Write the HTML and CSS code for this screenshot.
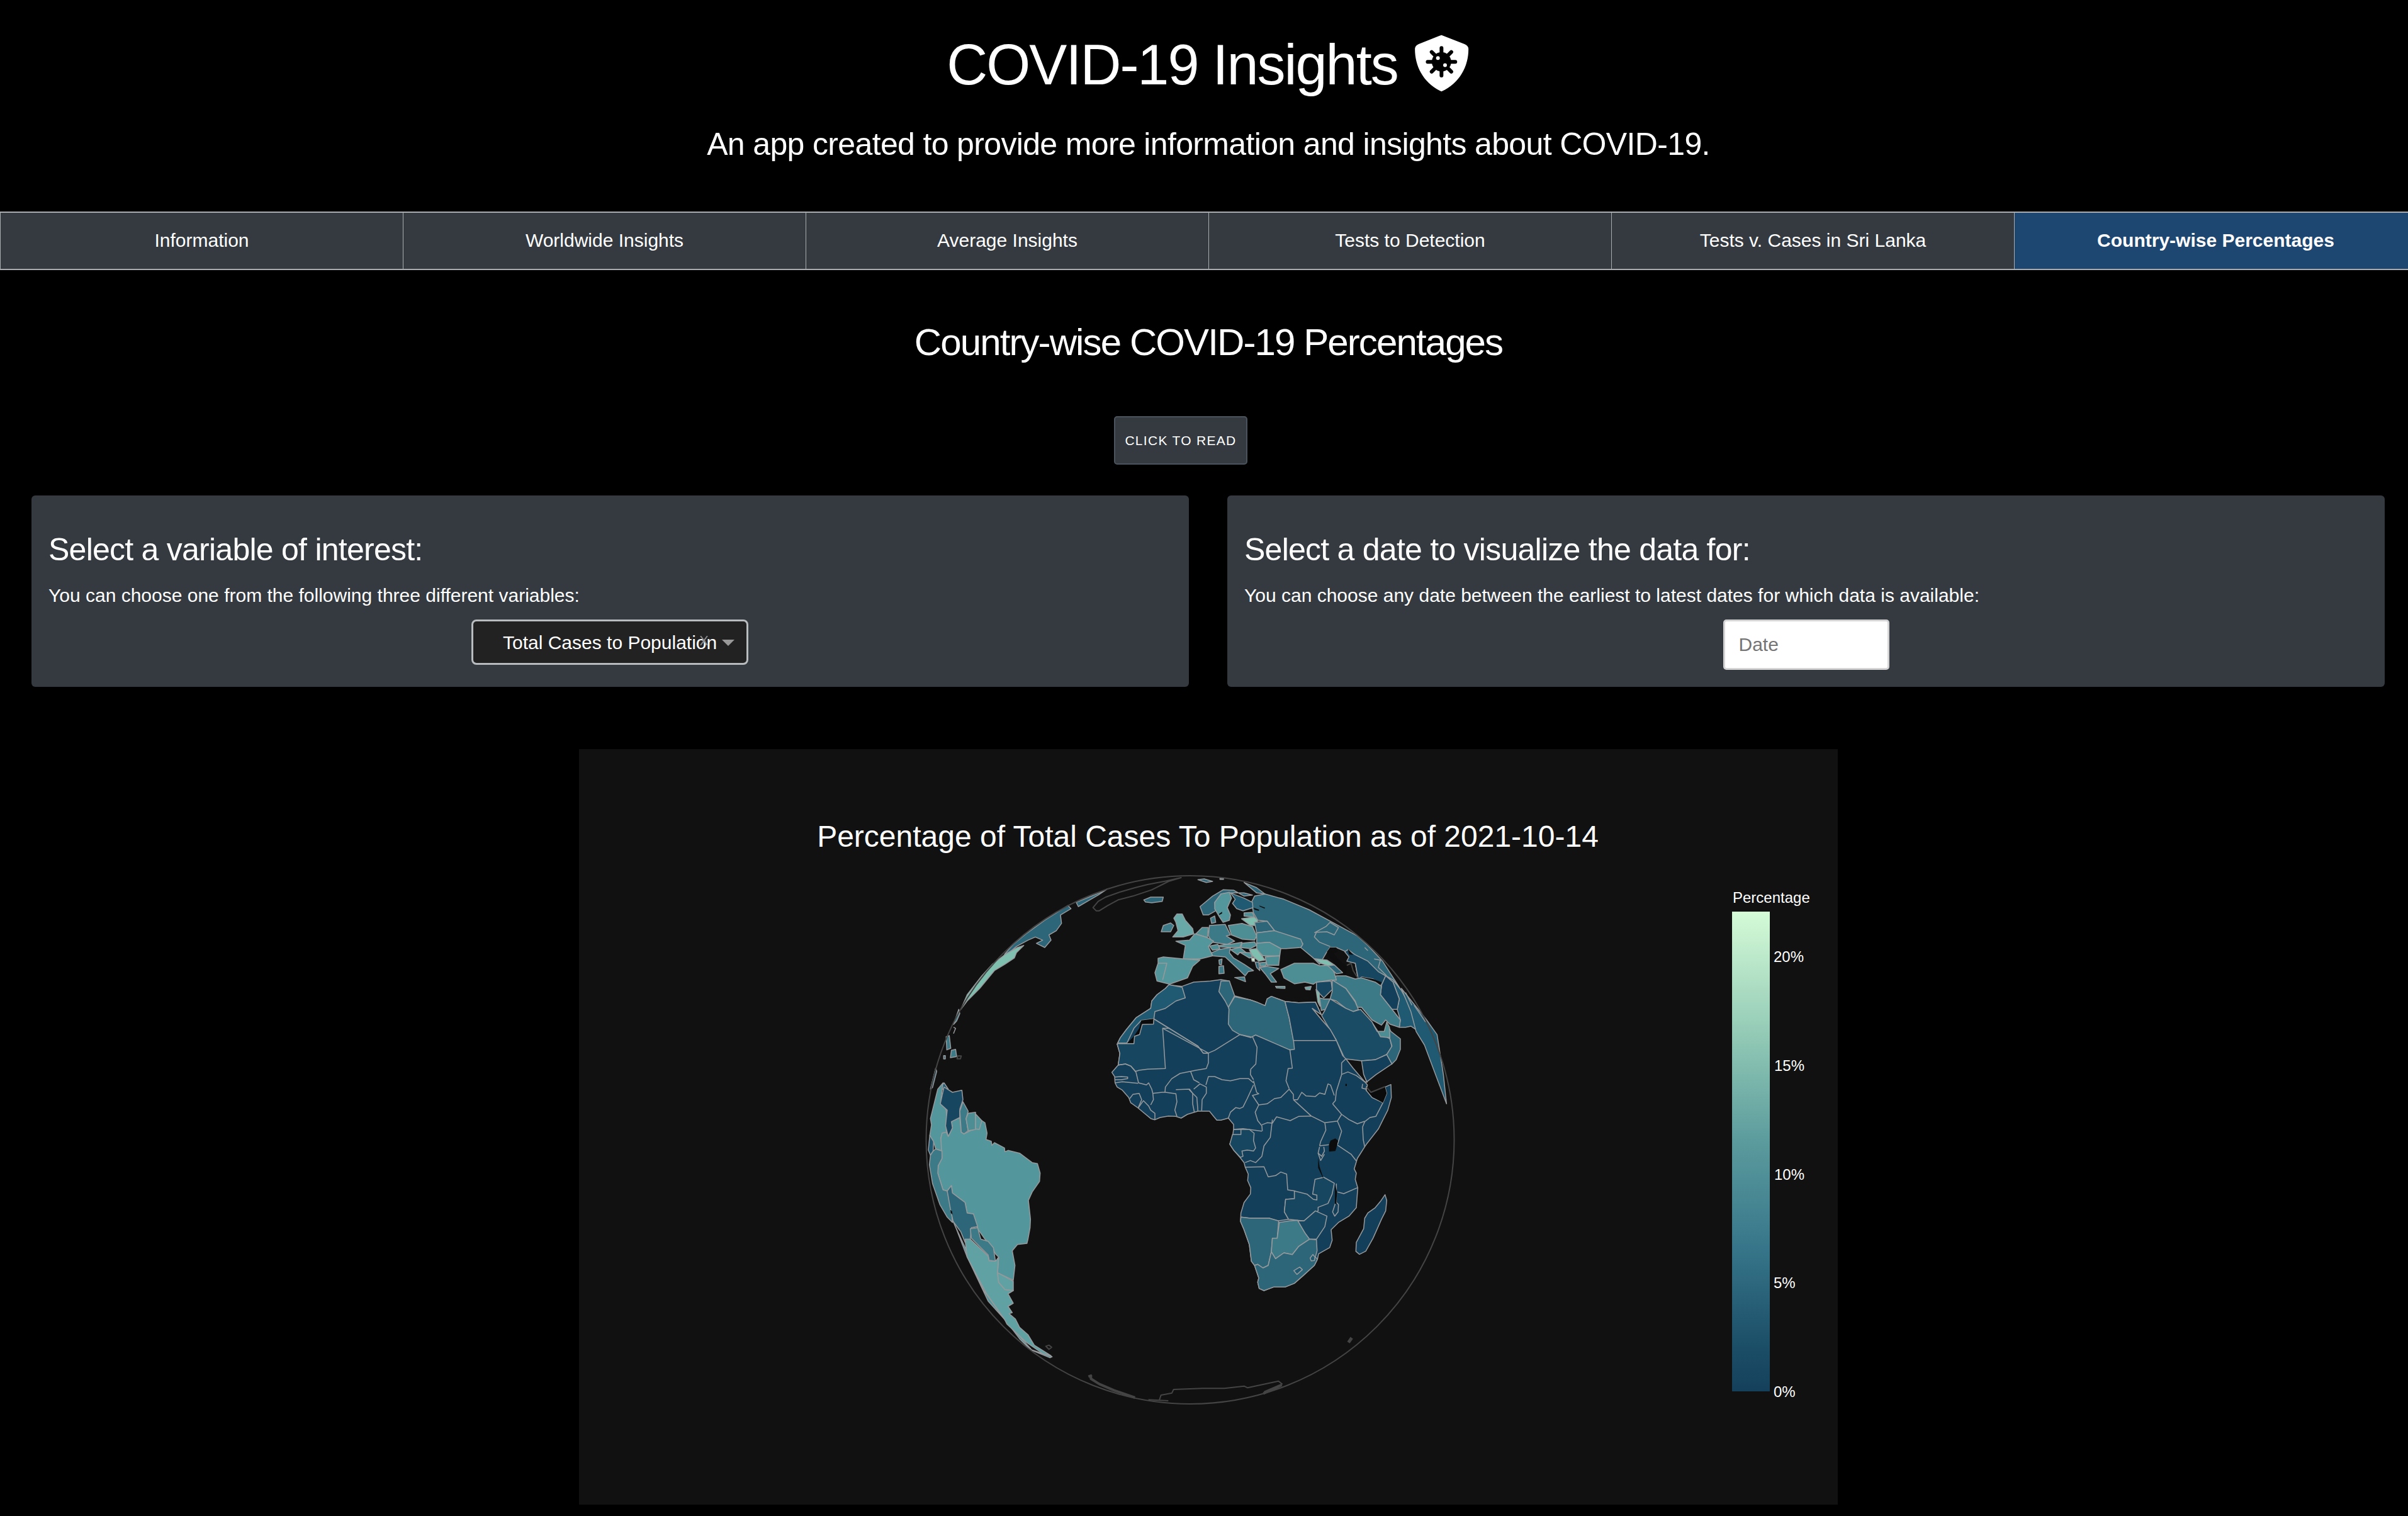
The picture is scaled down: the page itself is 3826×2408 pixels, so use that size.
FILE: index.html
```html
<!DOCTYPE html>
<html lang="en">
<head>
<meta charset="utf-8">
<title>COVID-19 Insights</title>
<link rel="stylesheet" href="styles.css">
</head>
<body>
<div class="page">
<header class="masthead">
  <h1 class="app-title">COVID-19 Insights
    <svg class="shield" viewBox="40 -20 285 292" aria-hidden="true">
      <path class="shield-body" d="M182 -18 L292 25 Q311 32 311 50 C311 130 270 212 182 252 C95 212 55 130 55 50 Q55 32 73 25 Z"/>
      <g class="virus">
        <circle cx="182" cy="110" r="46"/>
        <path d="M182 110V44M182 110V176M182 110H116M182 110H248M182 110L135 63M182 110L229 63M182 110L135 157M182 110L229 157"/>
      </g>
      <circle class="virus-hole" cx="165" cy="92" r="9"/>
      <circle class="virus-hole" cx="199" cy="126" r="9"/>
    </svg>
  </h1>
  <p class="app-sub">An app created to provide more information and insights about COVID-19.</p>
</header>

<nav class="tabs">
  <a class="tab">Information</a>
  <a class="tab">Worldwide Insights</a>
  <a class="tab">Average Insights</a>
  <a class="tab">Tests to Detection</a>
  <a class="tab">Tests v. Cases in Sri Lanka</a>
  <a class="tab tab-active">Country-wise Percentages</a>
</nav>

<main class="content">
  <h2 class="section-title">Country-wise COVID-19 Percentages</h2>
  <div class="read-row"><button class="read-btn">Click to read</button></div>

  <section class="controls">
    <div class="card">
      <h3 class="card-title">Select a variable of interest:</h3>
      <p class="card-text">You can choose one from the following three different variables:</p>
      <div class="card-control">
        <div class="dropdown">
          <span class="dropdown-value">Total Cases to Population</span>
          <svg class="dropdown-clear" viewBox="0 0 15 15" aria-hidden="true"><path d="M2 0L13 15M13 0L2 15"/></svg>
          <span class="dropdown-arrow"></span>
        </div>
      </div>
    </div>
    <div class="card">
      <h3 class="card-title">Select a date to visualize the data for:</h3>
      <p class="card-text">You can choose any date between the earliest to latest dates for which data is available:</p>
      <div class="card-control">
        <input class="date-input" type="text" placeholder="Date">
      </div>
    </div>
  </section>

  <section class="chart">
    <svg class="chart-svg" viewBox="920 1190 2000 1200" width="2000" height="1200">
      <defs>
        <linearGradient id="scale" x1="0" y1="0" x2="0" y2="1">
          <stop offset="0" stop-color="#d5fbd7"/>
          <stop offset="0.27" stop-color="#8fc7b4"/>
          <stop offset="0.48" stop-color="#5b9b9d"/>
          <stop offset="0.70" stop-color="#37768a"/>
          <stop offset="0.90" stop-color="#1c4f68"/>
          <stop offset="1" stop-color="#15405c"/>
        </linearGradient>
      </defs>

      <text class="chart-title" x="1919" y="1345">Percentage of Total Cases To Population as of 2021-10-14</text>

      <!-- North America limb, coordinates of crop at 1470,1390 x3 -->
      <g transform="translate(1470 1390) scale(.33333)">
        <polygon class="coast" points="800,155 815,170 830,170 870,145 920,118 990,100 1080,70 1160,30 1220,12 1150,28 1060,45 1000,60 930,80 860,105 825,125"/>
        <polygon class="l d5" points="480,280 570,215 680,145 695,160 645,190 650,230 625,265 590,285 600,310 570,345 530,325 560,310 525,295 490,310 435,340 400,370 370,395 380,375 420,330"/>
        <polygon class="l d11" points="320,425 385,375 440,345 470,335 435,370 425,395 380,425 330,455 260,540 200,600 170,640 200,570 270,480"/>
        <polygon class="l d5" points="720,130 780,105 830,85 870,65 825,95 790,115 730,150"/>
        <polygon class="l d6" points="100,770 115,765 122,825 103,833"/>
        <polygon class="l d6" points="125,835 145,830 150,865 120,870"/>
        <polygon class="l d5" points="88,860 96,860 96,876 88,876"/>
        <polygon class="l d6" points="160,640 135,712 150,695 165,660"/>
        <polygon class="l d4" points="25,1020 50,920 55,935 35,1012"/>
        <polygon class="l d4" points="65,1020 90,990 110,1020"/>
        <polyline class="b" points="135,725 145,730 135,755"/>
        <polygon class="coast" points="155,862 172,862 168,875 152,875"/>
      </g>

      <!-- Europe, Middle East, Asia: crop at 1780,1390 x3 -->
      <g transform="translate(1780 1390) scale(.33333)">
        <polygon class="l d5" points="640,100 690,90 780,115 900,165 1030,235 1130,290 1180,335 1250,410 1340,550 1300,500 1265,480 1245,525 1205,495 1150,485 1135,500 1120,420 1075,365 1030,345 1000,345 985,365 950,425 920,395 860,345 870,325 735,265 700,220 655,215 635,180 625,130"/>
        <polygon class="l d2" points="1070,365 1085,355 1120,380 1180,410 1230,460 1265,480 1245,525 1205,495 1150,485 1135,500 1120,420 1080,410 1090,390"/>
        <polygon class="hole" points="985,365 1000,345 1030,345 1035,365 1015,372 1050,410 1080,435 1075,475 1120,495 1135,500 1150,485 1205,495 1245,510 1240,525 1210,510 1150,500 1100,505 1075,480 1040,440 1000,395"/>
        <polygon class="hole" points="1085,352 1110,380 1090,378"/>
        <polyline class="coast-line" points="1080,430 1100,420 1110,455 1135,495"/>
        <polyline class="b" points="925,275 980,245 1000,225 1040,250 1020,285 985,270 935,272 925,295 950,320 1000,340"/>
        <polyline class="b" points="1165,345 1180,360"/>
        <polyline class="b" points="1210,400 1240,405 1230,440 1270,480"/>
        <polygon class="l d4" points="1265,480 1300,500 1340,550 1390,640 1415,740 1385,720 1360,725 1330,725 1335,690 1320,640 1330,590 1300,510"/>
        <polygon class="l d1" points="1245,525 1265,480 1300,510 1330,590 1320,640 1295,640 1240,570"/>
        <polygon class="l d4" points="1340,540 1420,640 1460,690 1510,760 1540,950 1555,1090 1450,810 1410,745 1385,650"/>
        <polyline class="b" points="1400,620 1455,700"/>
        <polyline class="b" points="1360,560 1390,620"/>

        <polygon class="l d6" points="1010,505 1030,480 1075,480 1120,495 1150,490 1215,510 1245,530 1240,570 1280,620 1335,690 1330,725 1285,710 1265,690 1245,715 1200,690 1150,630 1130,630 1120,600 1075,540"/>
        <polygon class="l d5" points="1010,500 1075,540 1120,605 1135,640 1110,650 1075,635 1030,600 1000,590 1010,555"/>
        <polygon class="l d2" points="935,510 1005,505 1010,545 970,585 950,565 935,545"/>
        <polygon class="l d6" points="950,585 970,590 1000,590 990,620 995,635 958,645"/>
        <polygon class="l d11" points="933,545 948,560 952,625 942,605"/>
        <polygon class="l d3" points="960,670 975,645 1000,590 1075,635 1110,650 1145,640 1200,700 1225,745 1285,780 1295,820 1270,855 1215,880 1150,885 1070,875 1030,788"/>
        <polygon class="l d1" points="1150,885 1215,880 1270,855 1295,900 1220,950 1175,985 1160,950"/>
        <polygon class="l d5" points="1270,855 1295,815 1285,780 1270,705 1290,745 1335,780 1335,830 1315,880 1295,900"/>
        <polygon class="l d7" points="1205,710 1225,740 1240,770 1285,775 1283,725 1270,700 1258,745 1225,745"/>

        <polygon class="l d7" points="765,450 830,420 920,420 950,432 1000,430 1020,465 1030,500 1005,500 935,510 920,520 880,510 830,518 780,490"/>
        <polygon class="l d11" points="925,398 985,405 1020,428 990,432 955,420"/>
        <polygon class="l d5" points="990,432 1020,428 1060,465 1030,470"/>

        <polygon class="l d5" points="380,150 440,100 490,70 540,72 590,100 630,95 590,85 525,85 480,90 450,130 455,170 420,190 395,190"/>
        <polygon class="l d8" points="480,90 520,82 530,110 510,155 525,190 520,215 490,225 470,195 450,160 450,130"/>
        <polygon class="l d4" points="525,85 590,110 630,130 632,155 585,170 555,160 535,135 548,115"/>
        <polygon class="hole" points="470,185 485,175 485,183 472,190"/>
        <polygon class="hole" points="635,155 662,165 660,170 640,165"/>
        <polygon class="hole" points="662,145 690,155 688,160 665,150"/>
        <polygon class="l d7" points="590,180 630,178 640,200 590,195"/>
        <polygon class="l d11" points="578,208 640,200 655,215 648,240 620,240"/>
        <polygon class="l d6" points="430,205 450,195 455,225 435,230"/>
        <polygon class="l d5" points="640,225 700,220 735,265 650,275"/>
        <polygon class="l d7" points="515,240 580,230 630,245 650,290 640,310 580,305 530,285"/>
        <polygon class="l d6" points="425,240 500,235 525,285 505,290 545,315 510,330 440,320 420,290"/>
        <polygon class="l d7" points="360,280 390,250 420,250 415,298"/>
        <polygon class="l d7" points="520,330 580,320 570,345 525,345 440,340 510,330"/>
        <polygon class="l d7" points="425,338 465,330 475,352 440,358"/>
        <polygon class="l d6" points="435,370 470,355 525,345 520,370 540,395 590,425 635,455 610,460 595,480 570,455 500,390 440,385"/>
        <polygon class="l d8" points="265,315 330,310 355,280 415,298 445,315 420,340 440,385 380,400 300,400 310,335"/>
        <polygon class="l d8" points="180,397 205,390 305,400 380,405 345,435 320,490 235,520 175,505 165,465 180,420"/>
        <polyline class="b" points="180,420 222,420 202,500"/>
        <polygon class="l d10" points="255,205 270,185 295,185 310,215 345,255 350,280 300,295 250,295 275,265 265,225"/>
        <polygon class="l d6" points="195,270 205,240 240,228 255,240 240,270"/>
        <polygon class="l d5" points="112,118 145,105 205,105 200,125 150,132 120,128"/>
        <polygon class="l d5" points="370,22 400,18 440,30 410,35"/>
        <polygon class="l d5" points="475,15 492,15 492,20 475,20"/>
        <polygon class="l d5" points="590,35 650,60 690,90 650,85"/>

        <polygon class="l d6" points="650,275 735,265 860,305 870,330 860,345 790,350 765,350 710,320 650,325"/>
        <polygon class="l d7" points="650,325 710,320 765,350 760,385 680,385 650,355"/>
        <polygon class="l d7" points="580,325 640,318 650,335 620,350 575,345"/>
        <polygon class="l d7" points="525,355 570,345 620,385 625,395 570,368 560,380"/>
        <polygon class="l d7" points="570,368 620,370 630,390 615,395"/>
        <polygon class="l d11" points="615,355 650,350 690,405 660,410 630,385"/>
        <polygon class="l d12" points="625,395 640,395 640,412 628,410"/>
        <polygon class="l d5" points="643,415 660,415 665,455 650,440"/>
        <polygon class="l d7" points="690,390 760,385 755,430 700,430"/>
        <polygon class="l d7" points="665,418 695,415 695,432 668,435"/>
        <polygon class="l d6" points="665,440 700,435 755,445 715,470 745,510 720,510 690,470"/>
        <polygon class="l d6" points="470,435 492,432 495,468 470,470"/>
        <polygon class="l d6" points="470,405 485,400 482,428 472,425"/>
        <polygon class="l d6" points="545,488 592,485 597,508"/>
        <polygon class="l d7" points="740,530 785,530 785,540 745,538"/>
        <polygon class="l d10" points="880,535 910,530 905,547 885,545"/>
      </g>

      <!-- Africa: crop at 1760,1620 x3 -->
      <g transform="translate(1760 1620) scale(.33333)">
        <polygon class="l d1" points="292,-168 305,-165 355,-160 410,-180 490,-185 540,-192 580,-185 585,-160 590,-130 605,-115 680,-95 710,-85 750,-68 760,-100 780,-112 845,-88 910,-82 990,-85 1018,-25 975,-55 1020,0 1060,45 1090,98 1120,170 1135,185 1170,230 1225,295 1238,310 1232,335 1260,370 1312,395 1330,350 1322,320 1350,308 1352,370 1335,430 1290,520 1235,590 1225,605 1190,660 1175,710 1185,730 1180,760 1192,800 1185,895 1150,935 1100,965 1065,1000 1070,1050 1058,1085 1005,1115 1000,1140 985,1170 930,1220 890,1255 845,1273 790,1273 745,1290 722,1280 715,1250 720,1230 700,1170 685,1150 675,1070 650,1000 633,960 635,920 650,870 680,830 682,800 667,765 670,735 655,700 650,680 630,655 600,620 582,592 595,560 600,520 600,498 575,468 540,478 520,478 505,460 485,435 430,435 380,450 350,468 325,460 290,458 250,465 225,476 205,470 145,420 110,395 100,370 70,335 45,320 35,300 33,270 20,250 50,215 58,160 45,115 60,85 90,45 135,-10 205,-55 210,-90 235,-120 275,-150"/>

        <polygon class="l d4" points="292,-168 355,-155 370,-105 325,-90 275,-55 225,-40 220,-5 160,2 125,40 92,110 48,110 60,85 90,45 135,-10 205,-55 210,-90 235,-120 275,-150"/>
        <polygon class="sahara" points="92,112 125,78 150,40 160,2 220,-5 218,20 165,22 152,70 128,78 125,112"/>
        <polyline class="b" points="48,113 125,113"/>

        <polygon class="l d2" points="48,113 125,113 128,78 152,70 165,22 218,20 220,-5 430,125 455,158 480,158 262,40 275,232 190,235 150,240 133,245 110,220 85,210 50,215 58,160 45,115"/>
        <polygon class="l d5" points="575,-60 605,-115 580,-185 540,-185 530,-135 560,-90"/>
        <polygon class="l d5" points="575,-60 605,-110 680,-95 710,-85 750,-68 760,-100 780,-112 845,-88 865,-10 885,90 890,140 868,143 705,72 685,82 630,70 595,50 575,20 578,-50"/>
        <polygon class="l d1" points="885,98 1090,98 1060,45 1020,0 975,-55 1018,-25 990,-85 910,-82 845,-88 865,-10"/>

        <polyline class="b" points="262,40 295,40"/>
        <polyline class="b" points="220,-5 430,125 455,158 480,158 510,145 630,70"/>
        <polyline class="b" points="630,70 685,85"/>
        <polyline class="b" points="50,215 85,210 110,220 135,250 147,300"/>
        <polyline class="b" points="35,272 65,270 95,272 95,280 65,285 35,285"/>
        <polyline class="b" points="35,300 70,295 145,302"/>
        <polyline class="b" points="147,300 185,310 195,300 210,330 215,350 218,380 205,405"/>
        <polyline class="b" points="105,375 120,355 150,350 162,380 145,420"/>
        <polyline class="b" points="145,420 170,385 195,410 205,430 225,445 225,476"/>
        <polyline class="b" points="213,350 260,345 275,345 325,352 330,390 320,430 330,460"/>
        <polyline class="b" points="325,332 390,330 405,350 405,400 413,440"/>
        <polyline class="b" points="388,332 425,370 430,435"/>
        <polyline class="b" points="410,330 440,305 470,320 470,350 450,380 448,432"/>
        <polyline class="b" points="273,345 275,320 305,280 345,255 395,245 410,285 437,300"/>
        <polyline class="b" points="395,245 420,240 470,232 480,205 480,158"/>
        <polyline class="b" points="690,80 712,130 706,210 682,235 680,260 695,285"/>
        <polyline class="b" points="468,310 480,270 510,270 545,285 585,290 630,280 672,280 695,300"/>
        <polyline class="b" points="695,310 665,375 645,415 630,422 610,418 585,440 575,468"/>
        <polyline class="b" points="695,290 710,345 720,352 690,360 720,405 703,440 715,480 735,505 737,530"/>
        <polyline class="b" points="720,405 760,400 795,375 825,370 865,330 885,355 885,378"/>
        <polyline class="b" points="868,140 880,230 860,232 850,290 865,328"/>
        <polyline class="b" points="885,380 905,380 925,345 945,362 990,365 1010,348 1035,355 1050,305 1062,310 1080,360"/>
        <polyline class="b" points="1135,185 1115,205 1115,260 1090,340 1085,385 1072,400"/>
        <polyline class="b" points="1115,260 1145,248 1185,265 1225,295 1238,298"/>
        <polyline class="b" points="1215,305 1212,325 1230,330 1235,315"/>
        <polyline class="b" points="1230,335 1312,395 1278,460 1250,465 1225,485"/>
        <polyline class="b" points="1072,400 1115,450 1150,475 1190,495 1225,483"/>
        <polyline class="b" points="1115,450 1095,482 1035,490"/>
        <polyline class="b" points="885,380 970,458 1035,490"/>
        <polyline class="b" points="735,500 760,490 785,492 805,462 870,480 910,460 970,458"/>
        <polyline class="b" points="785,475 775,560 745,600 735,650 705,680 680,670 655,680"/>
        <polyline class="b" points="600,522 645,518 735,530"/>

        <polygon class="l d2" points="595,546 635,546 635,522 675,522 698,540 695,575 705,610 695,625 665,620 640,625 645,650 632,655 600,620 582,592"/>
        <polyline class="b" points="600,522 635,522"/>
        <polyline class="b" points="655,702 745,700 765,748 800,742 825,725 853,735 858,810 893,815"/>
        <polyline class="b" points="890,815 890,852 848,855 842,915 862,950"/>
        <polygon class="l d2" points="890,815 950,830 980,855 997,858 997,835 977,830 988,760 1030,750 1080,778 1070,830 1050,875 1003,893 1003,910 935,958 905,955 862,950 842,915 848,855 890,852"/>
        <polyline class="b" points="1035,490 1040,525 1015,580 1010,600"/>
        <polyline class="b" points="1095,482 1115,530 1095,595"/>
        <polyline class="b" points="1095,597 1160,640 1185,672"/>
        <polyline class="b" points="1225,485 1215,510 1218,570 1225,605"/>
        <polyline class="b" points="1010,600 1055,595"/>
        <polyline class="b" points="1010,605 1003,635 1020,650 1033,625 1030,605"/>
        <polyline class="b" points="1003,635 1015,670 1033,640"/>
        <polyline class="b" points="1095,820 1125,828 1190,800"/>
        <polyline class="b" points="1090,780 1090,870 1100,880 1098,915 1082,935 1072,915 1085,875"/>
        <polygon class="l d2" points="935,958 990,910 1045,935 1035,985 995,1045 962,1045 940,1015 905,958"/>
        <polyline class="b" points="635,940 680,945 770,945 810,958 862,950"/>

        <polygon class="l d5" points="635,940 680,945 770,945 815,958 808,1040 785,1040 780,1105 765,1170 740,1182 715,1165 700,1170 685,1150 675,1070 650,1000 633,960"/>
        <polygon class="l d6" points="818,965 865,958 905,955 940,1015 962,1045 910,1080 880,1118 840,1110 800,1138 780,1105 785,1040 808,1040"/>
        <polygon class="l d5" points="700,1170 715,1165 740,1182 765,1170 780,1105 800,1138 840,1110 880,1118 910,1080 962,1045 995,1048 998,1100 990,1130 1000,1140 985,1170 930,1220 890,1255 845,1273 790,1273 745,1290 722,1280 715,1250 720,1230"/>
        <polygon class="l d4" points="887,1195 915,1178 928,1190 902,1213"/>
        <polygon class="l d4" points="965,1135 978,1118 988,1130 985,1147 970,1148"/>
        <polygon class="l d1" points="1322,833 1330,860 1325,910 1305,950 1265,1040 1230,1102 1200,1117 1183,1103 1185,1060 1220,995 1225,945 1240,920 1275,895 1300,865"/>

        <polygon class="sahara" points="1235,322 1255,345 1322,320 1330,350 1312,395 1260,365 1238,340"/>
        <polyline class="coast-line" points="1235,322 1255,345 1322,318"/>
        <polygon class="lake" points="1055,595 1062,575 1085,565 1098,575 1090,610 1085,625 1055,628"/>
        <polygon class="lake" points="1003,655 1010,700 1030,760 1022,745 1003,705"/>
        <polygon class="lake" points="1085,785 1093,820 1090,880 1083,875 1083,820"/>
        <polygon class="lake" points="1133,305 1140,305 1140,315 1133,315"/>
      </g>

      <!-- South America and Antarctica: crop at 1470,1720 x3 -->
      <g transform="translate(1470 1720) scale(.33333)">
        <polygon class="l d8" points="60,30 85,0 75,80 100,130 105,180 100,225 110,255 85,238 75,260 80,325 50,315 40,280 22,250 30,200 25,170 40,110"/>
        <polygon class="l d8" points="80,240 100,235 110,255 130,215 125,185 165,165 172,235 185,243 215,228 240,220 270,180 285,190 295,240 290,270 315,278 318,298 330,285 378,310 380,328 395,322 450,335 510,380 535,385 548,430 545,470 510,520 492,560 502,650 500,690 490,745 485,765 440,770 415,800 428,870 420,940 345,905 350,830 335,815 318,780 285,745 250,695 230,625 200,620 190,570 130,525 125,490 105,515 85,510 60,430 62,395 80,360 75,265"/>
        <polygon class="l d2" points="72,100 90,20 130,45 175,35 180,80 165,125 165,165 125,185 130,215 110,255 97,205 105,130"/>
        <polygon class="l d6" points="165,135 180,90 205,135 195,170 205,228 185,243 172,235"/>
        <polygon class="l d7" points="205,145 240,140 240,180 240,222 205,228 195,170"/>
        <polygon class="l d8" points="240,148 270,180 258,222 240,220"/>
        <polygon class="l d4" points="18,290 22,250 40,280 38,325 25,345 15,320"/>
        <polygon class="l d6" points="25,345 38,325 50,315 80,325 80,360 62,395 60,430 85,510 105,515 125,600 130,665 105,640 70,580 35,480 20,390"/>
        <polygon class="l d5" points="105,515 125,490 130,525 190,570 200,620 230,625 250,685 220,690 215,745 190,760 170,710 133,660 120,600"/>
        <polygon class="hole" points="120,605 128,612 130,628 122,620"/>
        <polygon class="l d6" points="215,695 250,690 265,745 300,755 325,785 335,850 305,845 300,820 220,740"/>
        <polygon class="l d8" points="133,660 165,730 195,795 210,850 300,1040 390,1140 450,1220 500,1270 605,1305 595,1310 510,1275 380,1130 280,990 200,830 150,700"/>
        <polygon class="l d9" points="190,745 215,745 300,825 305,848 335,850 350,830 345,905 350,950 380,985 420,990 395,1005 420,1050 395,1065 415,1095 400,1100 430,1125 450,1165 490,1200 520,1250 600,1300 560,1290 480,1235 390,1150 380,1130 290,1000 200,830 195,790"/>
        <polygon class="l d9" points="345,905 420,945 420,990 380,985 350,950"/>
        <polygon class="coast" points="575,1255 590,1250 603,1260 590,1270"/>
        <polyline class="coast-thick" points="778,1400 790,1395 790,1410 830,1435 900,1465 1000,1500"/>
        <polyline class="coast-line" points="1064,1510 1159,1515"/>
        <polyline class="coast-line" points="1115,1515 1124,1488 1176,1478 1184,1461 1322,1456 1426,1456 1520,1445 1537,1453 1684,1421 1701,1435 1615,1472"/>
        <polyline class="coast-thick" points="1612,1480 1700,1440"/>
      </g>
      <rect class="islet" x="2143" y="2124" width="5" height="9" transform="rotate(35 2145 2128)"/>

      <circle class="limb" cx="1891" cy="1810.5" r="419.5"/>

      <rect class="colorbar" x="2752" y="1448" width="60" height="762" fill="url(#scale)"/>
      <text class="cb-title" x="2753" y="1434">Percentage</text>
      <text class="cb-tick" x="2818" y="1528">20%</text>
      <text class="cb-tick" x="2819" y="1701">15%</text>
      <text class="cb-tick" x="2819" y="1874">10%</text>
      <text class="cb-tick" x="2818" y="2046">5%</text>
      <text class="cb-tick" x="2818" y="2219">0%</text>
    </svg>
  </section>
</main>
</div>
</body>
</html>
```
FILE: styles.css
```css
* { box-sizing: border-box; }
html, body { margin: 0; padding: 0; background: #000; }
body {
  height: 2408px;
  overflow: hidden;
  color: #fff;
  font-family: "Liberation Sans", Arial, sans-serif;
}
.page { width: 3840px; }

.masthead { padding-top: 49px; text-align: center; height: 336px; }
.app-title {
  margin: 0;
  display: flex;
  justify-content: center;
  align-items: center;
  gap: 22px;
  padding-left: 2px;
  font-size: 90px;
  font-weight: 400;
  line-height: 108px;
  letter-spacing: -2px;
}
.shield { width: 95px; height: 97px; }
.shield-body { fill: #fff; }
.virus { fill: #000; stroke: #000; }
.virus path { fill: none; stroke-width: 18; stroke-linecap: round; }
.virus-hole { fill: #fff; }
.app-sub {
  margin: 40px 0 0;
  font-size: 50px;
  line-height: 65px;
  letter-spacing: -0.65px;
}

.tabs {
  display: grid;
  grid-template-columns: repeat(6, 1fr);
  height: 93px;
}
.tab {
  display: flex;
  align-items: center;
  justify-content: center;
  padding-bottom: 2px;
  background: #343a40;
  border: 1px solid #a9adb0;
  border-width: 2px 0 2px 1px;
  font-size: 30px;
  color: #fff;
}
.tab-active { background: #1d4671; font-weight: 700; }

.section-title {
  margin: 79px 0 0;
  text-align: center;
  font-size: 60px;
  font-weight: 400;
  line-height: 72px;
  letter-spacing: -1.9px;
}
.read-row { display: flex; justify-content: center; margin-top: 81px; }
.read-btn {
  width: 212px;
  height: 77px;
  margin-right: 88px;
  padding: 0;
  background: #343a40;
  border: 2px solid #4b545c;
  border-radius: 5px;
  color: #fff;
  font-family: inherit;
  font-size: 21px;
  letter-spacing: 1.3px;
  text-transform: uppercase;
}

.controls {
  display: grid;
  grid-template-columns: 1839px 1839px;
  column-gap: 61px;
  margin: 49px 0 0 50px;
}
.card {
  height: 304px;
  padding: 56px 27px 0;
  background: #343a40;
  border-radius: 6px;
}
.card-title {
  margin: 0;
  font-size: 50px;
  font-weight: 400;
  line-height: 60px;
  letter-spacing: -0.75px;
}
.card-text {
  margin: 20px 0 0;
  font-size: 30px;
  line-height: 45px;
}
.card-control { display: flex; justify-content: center; margin-top: 16px; }

.dropdown {
  position: relative;
  display: flex;
  align-items: center;
  width: 440px;
  height: 72px;
  margin-left: -1px;
  padding: 2px 0 0 47px;
  background: #222;
  border: 3px solid #b9bcbe;
  border-radius: 8px;
  font-size: 30px;
}
.dropdown-clear {
  position: absolute;
  left: 359px;
  top: 23px;
  width: 15px;
  height: 15px;
}
.dropdown-clear path { fill: none; stroke: #8a8a8a; stroke-width: 2; }
.dropdown-arrow {
  position: absolute;
  left: 395px;
  top: 29px;
  border: 10px solid transparent;
  border-top-color: #999;
  border-bottom-width: 0;
}

.date-input {
  width: 264px;
  height: 80px;
  padding: 0 22px;
  background: #fff;
  border: 3px solid #d4d4d4;
  border-radius: 5px;
  font-family: inherit;
  font-size: 30px;
  color: #333;
  outline: none;
}
.date-input::placeholder { color: #757575; opacity: 1; }

.chart {
  width: 2000px;
  height: 1200px;
  margin: 99px 0 0 920px;
  background: #111;
}
.chart-svg { display: block; }
.chart-title {
  fill: #fff;
  font-family: "Liberation Sans", Arial, sans-serif;
  font-size: 48px;
  text-anchor: middle;
}
.cb-title, .cb-tick {
  fill: #fff;
  font-family: "Liberation Sans", Arial, sans-serif;
  font-size: 24px;
}

.l, .b, .coast, .coast-line, .coast-thick, .limb { vector-effect: non-scaling-stroke; stroke-linejoin: round; }
.l { stroke: #979a9c; stroke-width: 1.5; }
.b { fill: none; stroke: #979a9c; stroke-width: 1.5; }
.coast { fill: #111; stroke: #444; stroke-width: 2; }
.coast-line { fill: none; stroke: #444; stroke-width: 2; }
.coast-thick { fill: none; stroke: #444; stroke-width: 4; }
.hole { fill: #0e0e0e; }
.lake { fill: #0c0c0c; }
.sahara { fill: #0b0b0b; }
.islet { fill: #444; }
.limb { fill: none; stroke: #444; stroke-width: 2; }
.colorbar { stroke: none; }

.d1 { fill: #143f5a; }
.d2 { fill: #174660; }
.d3 { fill: #1b4c66; }
.d4 { fill: #1f5a72; }
.d5 { fill: #2d6678; }
.d6 { fill: #3d7a87; }
.d7 { fill: #4c8e93; }
.d8 { fill: #53969b; }
.d9 { fill: #60a2a4; }
.d10 { fill: #68a9a8; }
.d11 { fill: #7fbfb0; }
.d12 { fill: #d5f5d5; }
```
